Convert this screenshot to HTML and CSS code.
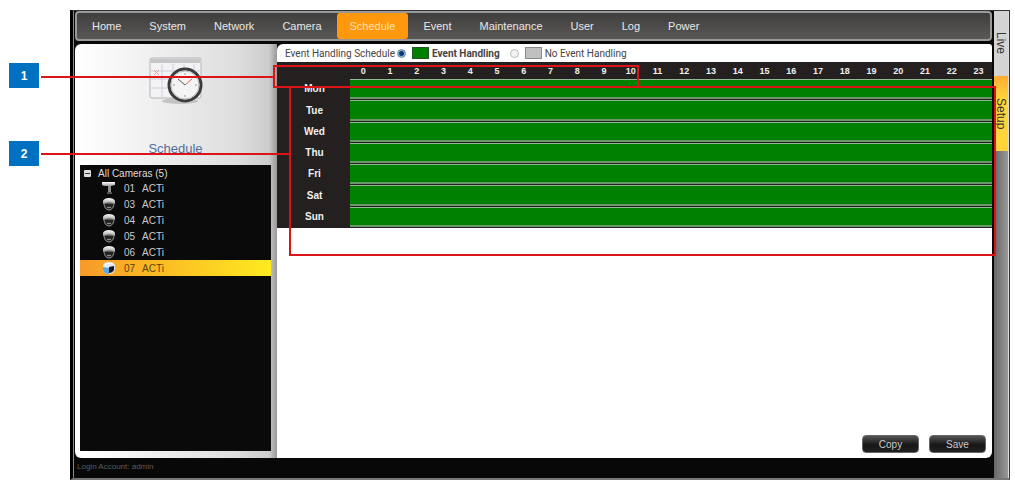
FILE: index.html
```html
<!DOCTYPE html>
<html lang="en">
<head>
<meta charset="utf-8">
<title>Schedule</title>
<link rel="stylesheet" href="styles.css">
<script src="schedule.js" defer></script>
</head>
<body>
<svg class="defs" aria-hidden="true">
  <defs>
    <linearGradient id="metal" x1="0" y1="0" x2="0" y2="1"><stop offset="0" stop-color="#fff"/><stop offset="1" stop-color="#999"/></linearGradient>
    <symbol id="bullet" viewBox="0 0 14 14"><path d="M0 1h13v3l-4 1H2L0 4z" fill="url(#metal)"/><path d="M6 5h3v6H6z" fill="#8d8d8d"/><path d="M5 11h5v2H5z" fill="#555"/></symbol>
    <symbol id="dome" viewBox="0 0 14 14"><path d="M2 6h10c0 4-2 7-5 7S2 10 2 6z" fill="#222" stroke="#999"/><path d="M1 7V4c1-4 11-4 12 0v3c-3-2-9-2-12 0z" fill="url(#metal)"/><path d="M5 10c1 1 3 1 4 0" fill="none" stroke="#aaa"/></symbol>
    <symbol id="cube" viewBox="0 0 14 14"><path d="M1 4c1-4 11-4 12 0v4c0 3-3 5-6 5S1 11 1 8z" fill="#dfe9f1"/><path d="M1 6l6 1v6c-3 0-6-2-6-5z" fill="#5da6e8"/><path d="M7 6l5-1v4c-1 2-3 3-5 3z" fill="#14181e"/><path d="M3 4c2-2 6-2 8-1" fill="none" stroke="#fff"/></symbol>
  </defs>
</svg>
<div class="app">
  <div class="main">
    <nav class="nav">
      <a href="#">Home</a><a href="#">System</a><a href="#">Network</a><a href="#">Camera</a><a href="#" class="active">Schedule</a><a href="#">Event</a><a href="#">Maintenance</a><a href="#">User</a><a href="#">Log</a><a href="#">Power</a>
    </nav>
    <div class="body">
      <aside class="side">
        <div class="hero">
          <svg class="hero-icon" viewBox="0 0 56 50" aria-hidden="true">
            <ellipse cx="32" cy="44" rx="18" ry="3" fill="#aaa" opacity=".6"/>
            <rect x="2" y="1" width="51" height="40" rx="2" fill="#f3f3f6" stroke="#b5b5b8"/>
            <path d="M3 2h49v4H3z" fill="#c6c6c9"/>
            <path d="M3 14h49M3 22h49M3 31h49M14 7v33M25 7v33M36 7v33M46 7v33" stroke="#cfcfdc" fill="none"/>
            <path d="M6 13l5 5M11 13l-5 5" stroke="#e99" fill="none"/>
            <circle cx="37" cy="28" r="16" fill="#f4f4f4" stroke="#3a3c3e" stroke-width="3"/>
            <circle cx="37" cy="28" r="14" fill="none" stroke="#b8b8b8"/>
            <path d="M30 22l7 6" stroke="#555" fill="none"/><path d="M37 28l7-6" stroke="#d66" fill="none"/>
            <path d="M37 16v2M37 38v2M25 28h2M47 28h2" stroke="#999"/>
          </svg>
          <h1>Schedule</h1>
        </div>
        <div class="tree">
          <div class="root"><button class="toggle" aria-label="Collapse all cameras"></button>All Cameras (5)</div>
          <ul>
            <li><svg><use href="#bullet"/></svg><span>01</span><span>ACTi</span></li>
            <li><svg><use href="#dome"/></svg><span>03</span><span>ACTi</span></li>
            <li><svg><use href="#dome"/></svg><span>04</span><span>ACTi</span></li>
            <li><svg><use href="#dome"/></svg><span>05</span><span>ACTi</span></li>
            <li><svg><use href="#dome"/></svg><span>06</span><span>ACTi</span></li>
            <li class="selected"><svg><use href="#cube"/></svg><span>07</span><span>ACTi</span></li>
          </ul>
        </div>
      </aside>
      <main class="panel">
        <div class="mode">
          <span>Event Handling Schedule</span>
          <input type="radio" name="mode" id="on" checked>
          <label for="on" class="strong"><i class="swatch green"></i>Event Handling</label>
          <input type="radio" name="mode" id="off">
          <label for="off"><i class="swatch"></i>No Event Handling</label>
        </div>
        <table class="grid">
          <thead><tr id="hours"><th class="day"></th></tr></thead>
          <tbody id="days"></tbody>
        </table>
        <div class="actions"><button>Copy</button><button>Save</button></div>
      </main>
    </div>
    <footer>Login Account: admin</footer>
  </div>
  <div class="rail"><a href="#" class="live">Live</a><a href="#" class="setup">Setup</a></div>
</div>
<div class="callout tag one">1</div><div class="callout line line-one"></div><div class="callout box box-one"></div>
<div class="callout tag two">2</div><div class="callout line line-two"></div><div class="callout box box-two"></div>
</body>
</html>
```
FILE: styles.css
```css
* { box-sizing: border-box; }
body { margin: 0; min-height: 100vh; padding: 10px 5px 1px 70px; display: flex; position: relative; background: #fff; font-family: "Liberation Sans", Arial, sans-serif; font-size: 10px; color: #222; }
a { color: inherit; text-decoration: none; }
.defs { position: absolute; width: 0; height: 0; }
.app { flex: 1; display: flex; background: #080808; border: 1px solid #333; border-left: 3px solid #000; border-bottom: 2px solid #777; box-shadow: inset 1px 0 #888; }
.main { flex: 1; min-width: 0; display: flex; flex-direction: column; padding-left: 2px; }
.nav { display: flex; align-items: stretch; height: 30px; margin-right: 2px; padding: 0 1px; border: 2px solid #999; border-radius: 4px; background: linear-gradient(#403e3d, #5a5856); color: #e8e8e8; font-size: 11px; }
.nav a { display: flex; align-items: center; padding: 0 14px; border-radius: 3px; }
.nav .active { background: #ff980c; color: #ffe0b0; padding: 0 13px; margin: 0 1px; }
.body { flex: 1; display: flex; margin-top: 3px; margin-right: 2px; }
.side { width: 202px; display: flex; flex-direction: column; padding: 0 6px 7px 5px; border-radius: 6px 0 0 6px; background: linear-gradient(90deg, #fff, #f1f1f1 35%, #dedede 80%, #ccc 96%, #999); }
.hero { height: 121px; display: flex; flex-direction: column; align-items: center; justify-content: space-between; padding: 13px 0 8px; }
.hero-icon { width: 56px; height: 50px; }
h1 { margin: 0; font-size: 13px; line-height: 16px; font-weight: 400; color: #526f9f; }
.tree { flex: 1; background: #0a0a0a; color: #ddd; padding-top: 2px; }
.root { display: flex; align-items: center; height: 13px; padding-left: 4px; gap: 7px; }
.toggle { width: 7px; height: 7px; padding: 2px 1px; border: 0; border-radius: 1px; background: linear-gradient(#333, #333) 50% 50% / 5px 1px no-repeat #ddd; }
ul { margin: 0; padding: 0; list-style: none; }
li { display: flex; align-items: center; height: 16px; padding-left: 22px; color: #ccc; }
li svg { width: 14px; height: 14px; margin-right: 8px; }
li span { width: 18px; }
.selected { background: linear-gradient(90deg, #f79a29, #ffea20); color: #5b420d; }
.panel { flex: 1; min-width: 0; display: flex; flex-direction: column; background: #fff; border-radius: 6px 3px 6px 0; }
.mode { display: flex; align-items: center; height: 18px; padding-left: 8px; color: #444; font-family: Roboto, "Liberation Sans", sans-serif; }
.mode input { appearance: none; width: 9px; height: 9px; margin: 0 6px 0 0; border: 1px solid #bbb; border-radius: 50%; background: #f2f2f2; }
.mode input:checked { border-color: #789; background: radial-gradient(#137 0 2px, #7bbccc 3px); }
.mode > span { margin-right: 2px; }
.mode label { display: flex; align-items: center; gap: 3px; }
.mode .strong { margin-right: 10px; font-weight: 700; }
.swatch { width: 17px; height: 12px; border: 1px solid #888; background: #c0c0c0; }
.swatch.green { background: #008000; border-color: #252; }
.grid { width: 100%; table-layout: fixed; border-spacing: 0 1px; background: #242020; color: #f0f0f0; }
.grid th { padding: 0; height: 20px; font-size: 10px; line-height: 12px; text-align: center; }
.grid thead th { height: 15px; font-size: 9px; vertical-align: middle; }
.grid .day { width: 73px; padding-left: 2px; }
.grid td { padding: 0; height: 20px; background: #008000; border-top: 1px solid #93b693; border-bottom: 2px solid #6b976b; }
.grid tbody tr:nth-child(4n + 2) td { height: 21px; }
.actions { display: flex; gap: 10px; margin-top: auto; padding: 0 6px 5px; justify-content: flex-end; }
.actions button { width: 57px; height: 18px; padding: 0; border: 1px solid #666; border-radius: 4px; background: linear-gradient(#555, #161616 55%, #222); color: #ccc; font: 10px "Liberation Sans", Arial, sans-serif; }
footer { height: 20px; padding: 3px 2px; color: #5c5c5c; font-size: 8px; line-height: 12px; }
.rail { width: 15px; display: flex; flex-direction: column; background: linear-gradient(90deg, #666, #999); border-right: 1px solid #ddd; font-size: 12px; color: #333; }
.rail a { writing-mode: vertical-rl; line-height: 14px; text-align: center; }
.live { height: 65px; background: #d3d3d3; }
.setup { height: 75px; background: linear-gradient(#ffac35, #ffd43b 30%); }
.callout { position: absolute; }
.tag { left: 9px; width: 30px; height: 25px; background: #0070c0; color: #fff; font-size: 12px; font-weight: 700; line-height: 27px; text-align: center; }
.one { top: 63px; }
.two { top: 141px; }
.line { left: 41px; height: 2px; background: #dc1418; }
.line-one { top: 76px; width: 232px; }
.line-two { top: 153px; width: 249px; }
.box { border: 2px solid #dc1418; }
.box-one { left: 273px; top: 65px; width: 366px; height: 23px; }
.box-two { left: 289px; right: 19px; top: 86px; height: 170px; }
```
FILE: schedule.js
```js
const hours = document.getElementById("hours");
for (let h = 0; h < 24; h++) {
  const th = document.createElement("th");
  th.scope = "col";
  th.textContent = h;
  hours.append(th);
}
const days = document.getElementById("days");
for (const name of ["Mon", "Tue", "Wed", "Thu", "Fri", "Sat", "Sun"]) {
  const row = days.insertRow();
  const th = document.createElement("th");
  th.scope = "row";
  th.className = "day";
  th.textContent = name;
  row.append(th);
  for (let h = 0; h < 24; h++) row.insertCell();
}
```
